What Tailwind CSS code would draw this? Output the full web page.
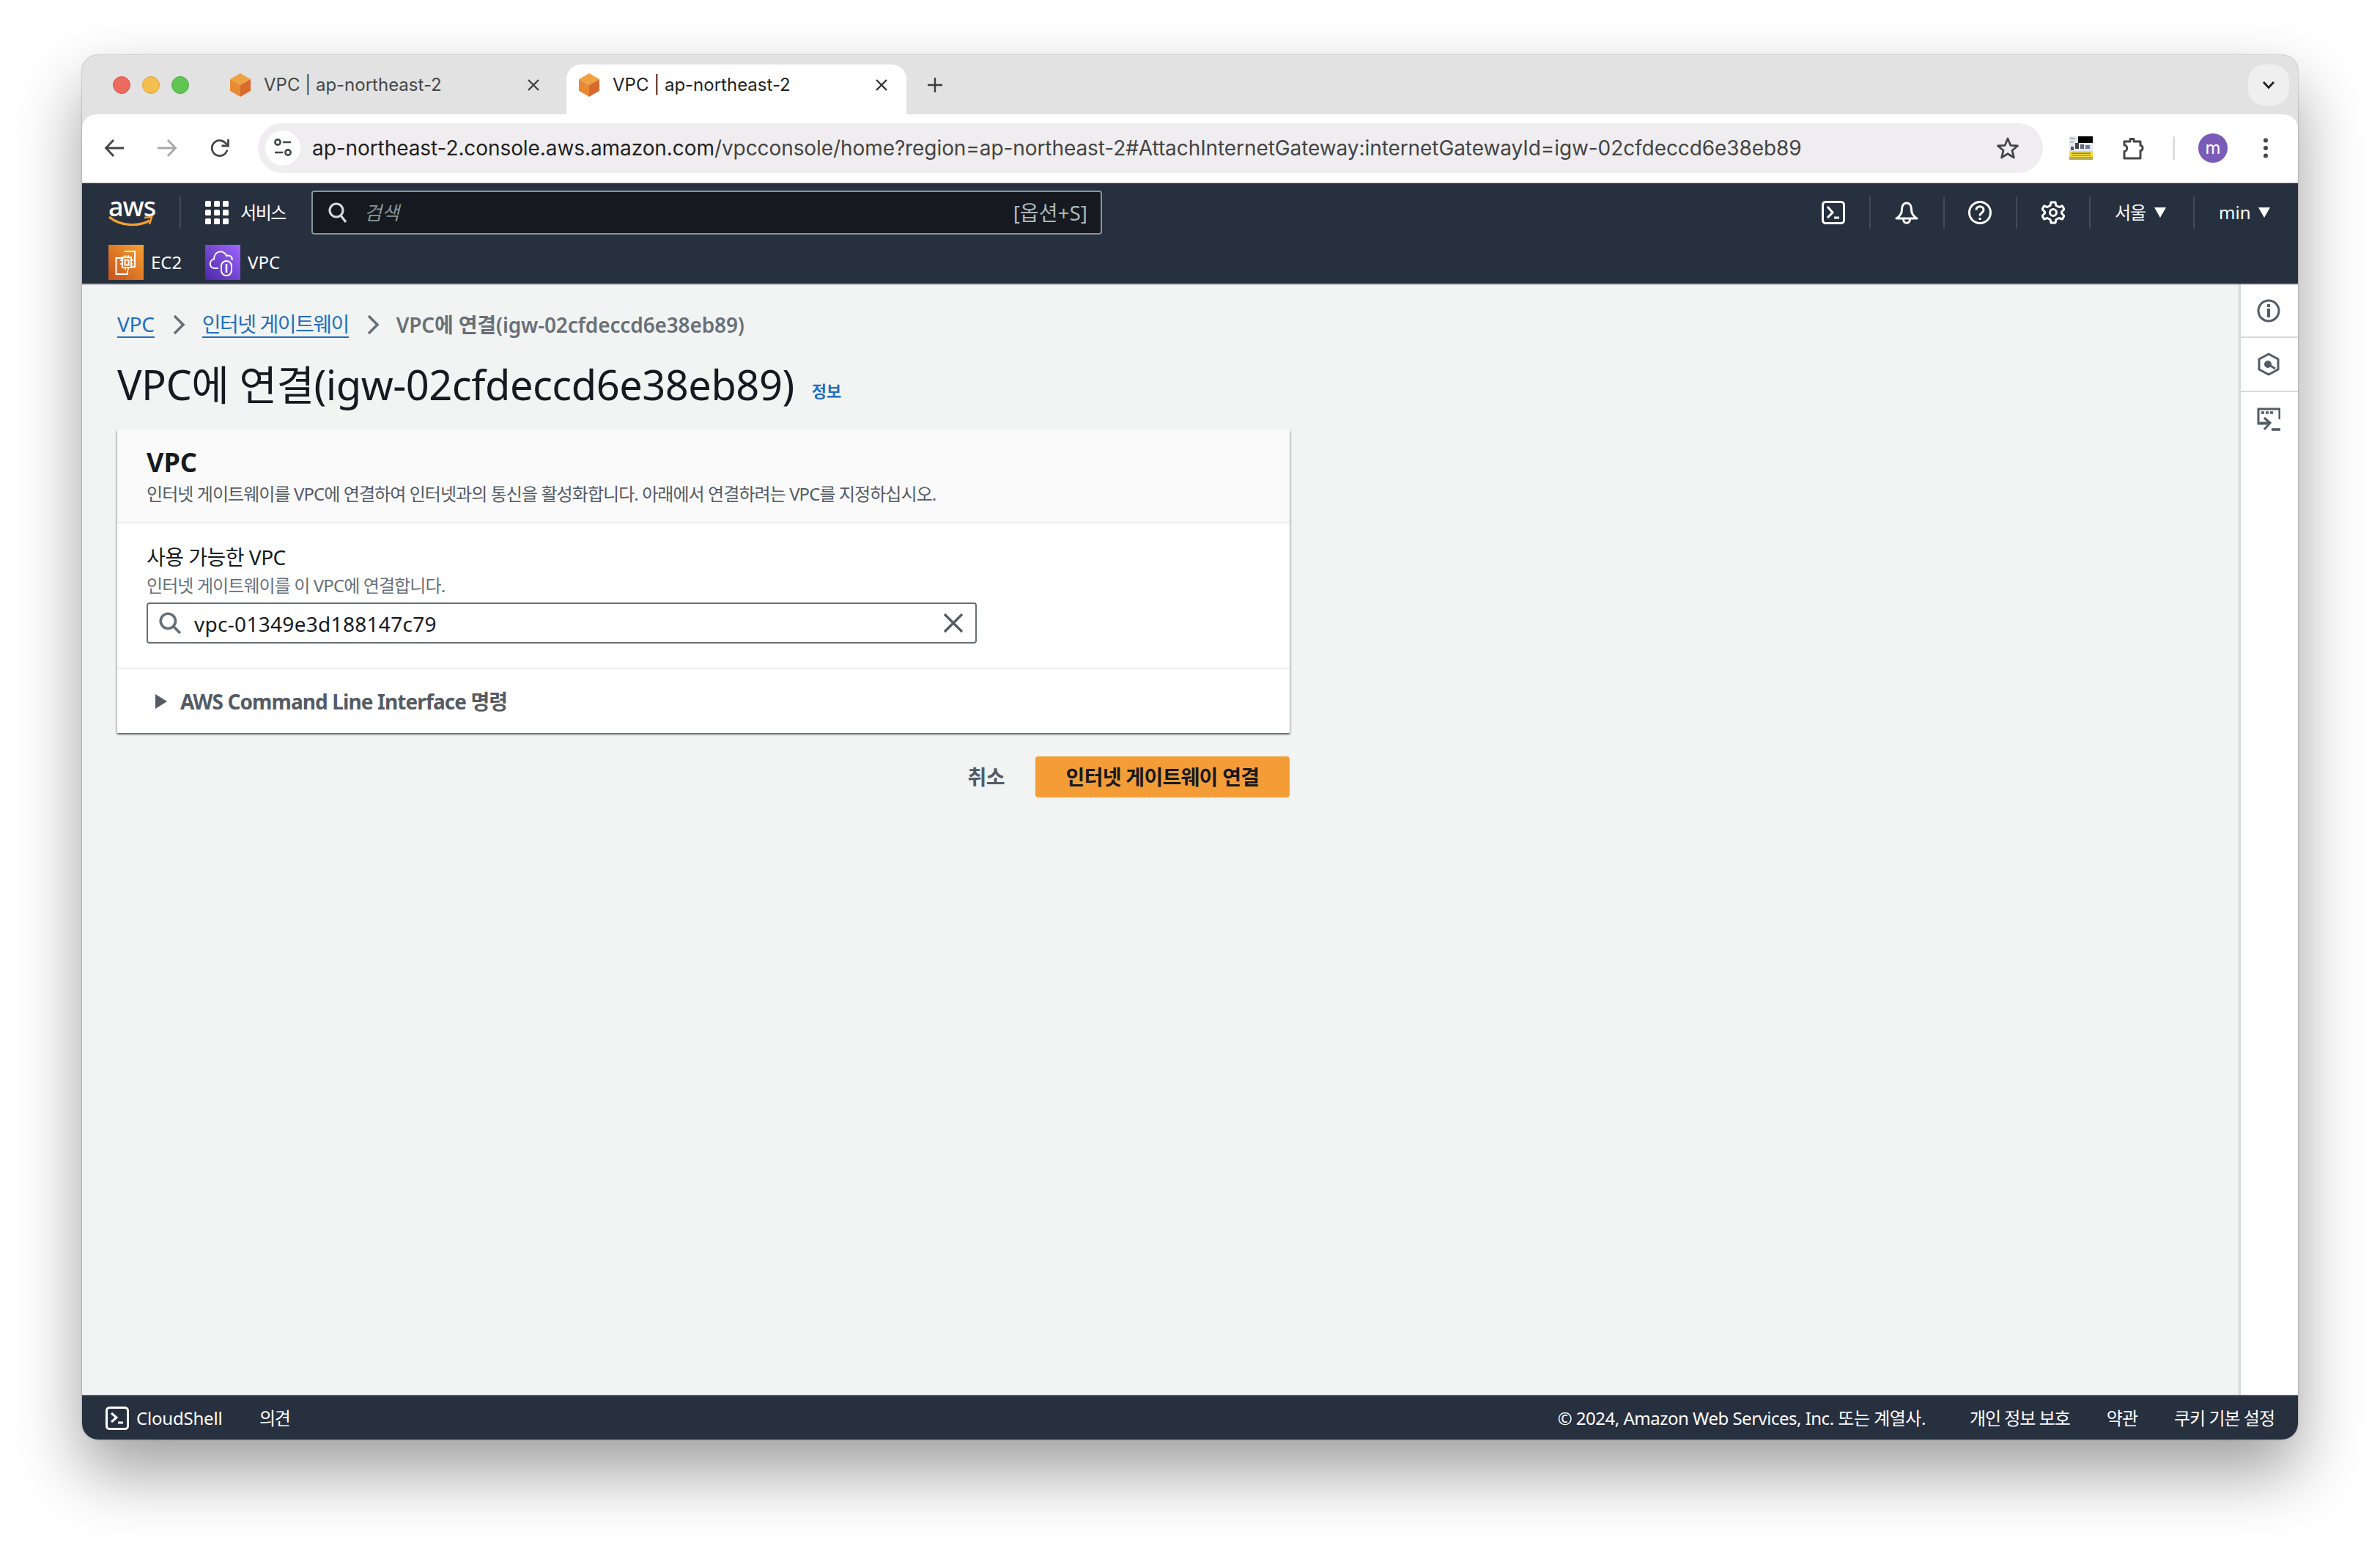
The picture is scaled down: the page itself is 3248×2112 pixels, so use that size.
<!DOCTYPE html>
<html lang="ko">
<head>
<meta charset="UTF-8">
<title>VPC | ap-northeast-2</title>
<script src="https://cdn.jsdelivr.net/npm/@tailwindcss/browser@4"></script>
</head>
<body class="bg-white w-[3248px] h-[2112px] overflow-hidden font-['Noto_Sans','Noto_Sans_CJK_KR',sans-serif]">
<div class="ml-[112px] mt-[75px] w-[3024px] h-[1889px] flex flex-col rounded-[22px] overflow-hidden bg-[#e2e2e2] shadow-[0_0_2px_rgba(0,0,0,0.45),0_44px_90px_rgba(0,0,0,0.38)]">

  <!-- tab strip -->
  <div class="h-[81px] shrink-0 flex pt-[13px] font-['Inter','Noto_Sans_CJK_KR',sans-serif] text-[24px]">
    <div class="h-[56px] ml-[42px] flex items-center gap-[16px]">
      <span class="w-[24px] h-[24px] rounded-full bg-[#ed6a5e] border border-[#d9534a]"></span>
      <span class="w-[24px] h-[24px] rounded-full bg-[#f5bf4f] border border-[#dca33a]"></span>
      <span class="w-[24px] h-[24px] rounded-full bg-[#61c554] border border-[#4cab40]"></span>
    </div>
    <div class="w-[459px] h-[68px] ml-[56px] pb-[12px] flex items-center text-[#444746]">
      <svg class="w-[28px] h-[32px] shrink-0" viewBox="0 0 28 32"><path d="M14 0 28 8 14 16 0 8z" fill="#f0a243"/><path d="M0 8 14 16V32L0 24z" fill="#e88a34"/><path d="M28 8 14 16V32L28 24z" fill="#d8692f"/></svg>
      <span class="ml-[18px] flex-1 whitespace-nowrap">VPC | ap-northeast-2</span>
      <svg class="w-[18px] h-[18px] mr-[36px]" viewBox="0 0 18 18" fill="none" stroke="#444" stroke-width="2.4"><path d="M2 2 16 16M16 2 2 16"/></svg>
    </div>
    <div class="w-[464px] h-[68px] pl-[17px] pr-[25px] pb-[12px] flex items-center bg-white rounded-t-[20px] text-[#1f1f1f]">
      <svg class="w-[28px] h-[32px] shrink-0" viewBox="0 0 28 32"><path d="M14 0 28 8 14 16 0 8z" fill="#f0a243"/><path d="M0 8 14 16V32L0 24z" fill="#e88a34"/><path d="M28 8 14 16V32L28 24z" fill="#d8692f"/></svg>
      <span class="ml-[18px] flex-1 whitespace-nowrap">VPC | ap-northeast-2</span>
      <svg class="w-[18px] h-[18px]" viewBox="0 0 18 18" fill="none" stroke="#333" stroke-width="2.4"><path d="M2 2 16 16M16 2 2 16"/></svg>
    </div>
    <div class="h-[56px] ml-[28px] flex items-center">
      <svg class="w-[22px] h-[22px]" viewBox="0 0 22 22" fill="none" stroke="#3c3c3c" stroke-width="2.4"><path d="M11 1V21M1 11H21"/></svg>
    </div>
    <div class="ml-auto mr-[12px] w-[56px] h-[56px] rounded-[22px] bg-[#efefef] flex items-center justify-center">
      <svg class="w-[18px] h-[12px]" viewBox="0 0 18 12" fill="none" stroke="#222" stroke-width="2.8"><path d="M2 2 9 9.5 16 2"/></svg>
    </div>
  </div>

  <!-- toolbar -->
  <div class="h-[94px] shrink-0 bg-white rounded-t-[20px] border-b-2 border-[#e3e4e4] flex items-center">
    <svg class="ml-[30px] w-[28px] h-[28px]" viewBox="0 0 28 28" fill="none" stroke="#444746" stroke-width="2.8"><path d="M27 14H3M13 3 2.500 14 13 25"/></svg>
    <svg class="ml-[44px] w-[28px] h-[28px]" viewBox="0 0 28 28" fill="none" stroke="#a8a8a8" stroke-width="2.8"><path d="M1 14H25M15 3 25.500 14 15 25"/></svg>
    <svg class="ml-[44px] w-[28px] h-[28px]" viewBox="0 0 28 28" fill="none" stroke="#444746" stroke-width="2.8"><path d="M24 16.500A10.500 10.500 0 1 1 21 6.500L25 10"/><path d="M25.500 2V11H16.500" /></svg>
    <div class="ml-[38px] w-[2436px] h-[68px] rounded-full bg-[#efedef] flex items-center pl-[10px] pr-[32px]">
      <div class="w-[48px] h-[48px] rounded-full bg-white flex items-center justify-center">
        <svg class="w-[26px] h-[28px]" viewBox="0 0 26 28" fill="none" stroke="#444746" stroke-width="2.6"><circle cx="6" cy="6" r="3.600"/><path d="M13 6H24M2 20H13"/><circle cx="20" cy="20" r="3.600"/></svg>
      </div>
      <span class="ml-[16px] flex-1 whitespace-nowrap font-['Inter',sans-serif] text-[28px] tracking-[-0.08px] text-[#1f1f1f]">ap-northeast-2.console.aws.amazon.com<span class="text-[#444]">/vpcconsole/home?region=ap-northeast-2#AttachInternetGateway:internetGatewayId=igw-02cfdeccd6e38eb89</span></span>
      <svg class="w-[32px] h-[32px]" viewBox="0 0 32 32" fill="none" stroke="#444746" stroke-width="2.800" stroke-linejoin="round"><path d="M16 3 19.800 12.300 29.500 13 22 19.300 24.400 29 16 23.700 7.600 29 10 19.300 2.500 13 12.200 12.300z"/></svg>
    </div>
    <svg class="ml-[36px] w-[32px] h-[32px]" viewBox="0 0 32 32">
      <rect width="32" height="32" fill="#e4e8f2"/><rect x="12" width="20" height="9" fill="#000"/><rect x="1" y="2" width="7" height="1.500" fill="#999"/><rect x="1" y="7" width="5" height="1.500" fill="#aaa"/><rect x="8" y="9" width="5" height="8" fill="#444"/><rect x="15" y="11" width="5" height="6" fill="#667"/><rect x="22" y="12" width="6" height="5" fill="#778"/><rect x="2" y="14" width="4" height="5" fill="#555"/><rect y="20" width="32" height="8" fill="#f6dd3c"/><rect x="3" y="22.500" width="26" height="1.200" fill="#665"/><rect x="3" y="25.500" width="26" height="1.200" fill="#887"/><rect y="28" width="32" height="4" fill="#b3a758"/>
    </svg>
    <svg class="ml-[40px] w-[32px] h-[32px]" viewBox="0 0 32 32" fill="none" stroke="#444746" stroke-width="3" stroke-linejoin="round"><path d="M3 7H11V3.500H16V7H25V12.500C29 11.500 29 20.500 25 19.500V30H3V20.500C8 20.500 8 12 3 12z"/></svg>
    <span class="ml-[37px] w-[3px] h-[32px] rounded bg-[#dedede]"></span>
    <span class="ml-[32px] w-[40px] h-[40px] rounded-full bg-[#7a5bb8] text-white text-[24px] flex items-center justify-center font-['Inter',sans-serif] leading-none">m</span>
    <svg class="ml-[48px] w-[8px] h-[28px]" viewBox="0 0 8 28" fill="#444746"><circle cx="4" cy="3.500" r="3"/><circle cx="4" cy="14" r="3"/><circle cx="4" cy="24.500" r="3"/></svg>
  </div>

  <!-- aws nav -->
  <div class="h-[138px] shrink-0 bg-[#27303f] border-b-2 border-[#525a66] text-white">
    <div class="h-[70px] pt-[10px] flex items-center text-[24px]">
      <div class="ml-[36px] w-[62px] h-[46px] relative">
        <span class="block text-[36px] leading-[30px] text-center font-medium tracking-[-1px]">aws</span>
        <svg class="absolute left-0 top-[26px] w-[62px] h-[20px]" viewBox="0 0 62 20" fill="none"><path d="M1 3C16 15 40 17 56 8" stroke="#f0a035" stroke-width="3.400"/><path d="M49 4 59 3 56 13" stroke="#f0a035" stroke-width="2.600"/></svg>
      </div>
      <span class="ml-[35px] w-[2px] h-[44px] bg-[#414b5a]"></span>
      <svg class="ml-[33px] w-[32px] h-[32px]" viewBox="0 0 32 32" fill="#fff"><rect width="8" height="8" rx="1.500"/><rect x="12" width="8" height="8" rx="1.500"/><rect x="24" width="8" height="8" rx="1.500"/><rect y="12" width="8" height="8" rx="1.500"/><rect x="12" y="12" width="8" height="8" rx="1.500"/><rect x="24" y="12" width="8" height="8" rx="1.500"/><rect y="24" width="8" height="8" rx="1.500"/><rect x="12" y="24" width="8" height="8" rx="1.500"/><rect x="24" y="24" width="8" height="8" rx="1.500"/></svg>
      <span class="ml-[16px] w-[62px] whitespace-nowrap tracking-[-1.400px]">서비스</span>
      <div class="ml-[35px] w-[1079px] h-[60px] flex items-center pl-[20px] pr-[18px] bg-[#16191f] border-2 border-[#87959a] rounded-[4px]">
        <svg class="w-[28px] h-[30px]" viewBox="0 0 28 30" fill="none" stroke="#d5dbdb" stroke-width="3.200"><circle cx="12" cy="12" r="9"/><path d="M18 19 25 28"/></svg>
        <span class="ml-[22px] italic text-[#879596] text-[26px] flex-1">검색</span>
        <span class="text-[#aab7b8] text-[28px]">[옵션+S]</span>
      </div>
      <svg class="ml-[982px] w-[32px] h-[32px]" viewBox="0 0 32 32" fill="none" stroke="#fff" stroke-width="3"><rect x="1.500" y="1.500" width="29" height="29" rx="4"/><path d="M8 8 15 16 8 23M17 23H24"/></svg>
      <span class="ml-[33px] w-[2px] h-[44px] bg-[#414b5a]"></span>
      <svg class="ml-[33px] w-[32px] h-[32px]" viewBox="0 0 32 32" fill="none" stroke="#fff" stroke-width="3" stroke-linejoin="round"><path d="M16 3C11 3 9.500 8 9.500 12 9.500 18 7 21 2 24H30C25 21 22.500 18 22.500 12 22.500 8 21 3 16 3z"/><path d="M11.500 25C11.500 32 20.500 32 20.500 25"/></svg>
      <span class="ml-[34px] w-[2px] h-[44px] bg-[#414b5a]"></span>
      <svg class="ml-[32px] w-[32px] h-[32px]" viewBox="0 0 32 32" fill="none" stroke="#fff" stroke-width="3"><circle cx="16" cy="16" r="14.500"/><path d="M11 12.500C11 6 21 6 21 12.500 21 16.500 16 16 16 20.500"/><path d="M16 23V26"/></svg>
      <span class="ml-[33px] w-[2px] h-[44px] bg-[#414b5a]"></span>
      <svg class="ml-[33px] w-[32px] h-[32px]" viewBox="0 0 32 32" fill="none" stroke="#fff" stroke-width="3" stroke-linejoin="round"><path d="M13 2H19L20 6.500 24 8.500 28.500 7 31 11.500 27.500 15V17L31 20.500 28.500 25 24 23.500 20 25.500 19 30H13L12 25.500 8 23.500 3.500 25 1 20.500 4.500 17V15L1 11.500 3.500 7 8 8.500 12 6.500z"/><circle cx="16" cy="16" r="4.500"/></svg>
      <span class="ml-[33px] w-[2px] h-[44px] bg-[#414b5a]"></span>
      <span class="ml-[33px] w-[41px] whitespace-nowrap tracking-[-1px]">서울</span>
      <span class="ml-[13px] w-0 h-0 border-x-[8px] border-x-transparent border-t-[14px] border-t-white"></span>
      <span class="ml-[37px] w-[2px] h-[44px] bg-[#414b5a]"></span>
      <span class="ml-[33px] w-[42px] whitespace-nowrap">min</span>
      <span class="ml-[12px] w-0 h-0 border-x-[8px] border-x-transparent border-t-[14px] border-t-white"></span>
    </div>
    <div class="h-[66px] pt-[14px] flex items-start text-[24px]">
      <div class="ml-[36px] w-[48px] h-[48px] bg-gradient-to-tr from-[#c8511b] to-[#f5a133] flex items-center justify-center">
        <svg class="w-[40px] h-[40px]" viewBox="0 0 40 40" fill="none" stroke="#fff" stroke-width="2"><path d="M18 5H32V26H28M17 14H6.500V36H22V31"/><rect x="15" y="13" width="12" height="14"/><rect x="18.500" y="16.500" width="5" height="7"/><path d="M19 10V13M23 10V13M19 27V30M23 27V30M12 17H15M12 22H15M27 17H30M27 22H30" stroke-width="1.600"/></svg>
      </div>
      <span class="ml-[10px] w-[41px] leading-[48px]">EC2</span>
      <div class="ml-[33px] w-[48px] h-[48px] bg-gradient-to-tr from-[#4d27a8] to-[#a166ff] flex items-center justify-center">
        <svg class="w-[40px] h-[40px]" viewBox="0 0 40 40" fill="none" stroke="#fff" stroke-width="2"><path d="M14 28H9C1 28 1 17 8 15.500 8 4 22 2 25 11 30 9 33.500 13 32.500 17"/><rect x="18" y="18" width="14" height="20" rx="7"/><path d="M25 22V34" stroke-width="2.600"/></svg>
      </div>
      <span class="ml-[10px] w-[44px] leading-[48px]">VPC</span>
    </div>
  </div>

  <!-- content -->
  <div class="flex-1 min-h-0 flex bg-[#f2f3f3]">
    <div class="flex-1 pl-[48px]">
      <div class="mt-[36px] h-[38px] flex items-center text-[28px] whitespace-nowrap">
        <a class="text-[#1f6fbd] border-b-2 border-[#1f6fbd] leading-[34px] tracking-[-0.2px]" href="#">VPC</a>
        <svg class="ml-[24px] w-[18px] h-[30px]" viewBox="0 0 18 30" fill="none" stroke="#687078" stroke-width="3.600"><path d="M3 3 15 15 3 27"/></svg>
        <a class="ml-[23px] text-[#1f6fbd] border-b-2 border-[#1f6fbd] leading-[34px] tracking-[-1.5px]" href="#">인터넷 게이트웨이</a>
        <svg class="ml-[24px] w-[18px] h-[30px]" viewBox="0 0 18 30" fill="none" stroke="#687078" stroke-width="3.600"><path d="M3 3 15 15 3 27"/></svg>
        <span class="ml-[23px] text-[#687078] font-semibold tracking-[-0.15px]">VPC에 연결(igw-02cfdeccd6e38eb89)</span>
      </div>
      <div class="mt-[28px] h-[68px] flex items-center whitespace-nowrap">
        <h1 class="text-[56px] leading-[68px] text-[#16191f] tracking-[-0.5px]">VPC에 연결(igw-02cfdeccd6e38eb89)</h1>
        <a class="ml-[24px] mt-[18px] text-[22px] font-semibold text-[#1f6fbd]" href="#">정보</a>
      </div>

      <div class="mt-[28px] w-[1600px] h-[414px] flex flex-col bg-white shadow-[0_2px_2px_rgba(0,28,36,0.5),2px_2px_2px_rgba(0,28,36,0.12),-2px_2px_2px_rgba(0,28,36,0.12)]">
        <div class="h-[128px] shrink-0 bg-[#fafafa] border-b-2 border-[#eaeded] pl-[40px] pt-[21px]">
          <h2 class="text-[36px] leading-[48px] font-bold text-[#16191f]">VPC</h2>
          <p class="mt-[1px] text-[24px] leading-[36px] text-[#545b64] whitespace-nowrap tracking-[-0.93px]">인터넷 게이트웨이를 VPC에 연결하여 인터넷과의 통신을 활성화합니다. 아래에서 연결하려는 VPC를 지정하십시오.</p>
        </div>
        <div class="h-[199px] shrink-0 border-b-2 border-[#eaeded] pl-[40px] pt-[28px]">
          <div class="text-[28px] leading-[36px] text-[#16191f] tracking-[-0.5px]">사용 가능한 VPC</div>
          <div class="mt-[3px] text-[24px] leading-[36px] text-[#687078] tracking-[-0.9px]">인터넷 게이트웨이를 이 VPC에 연결합니다.</div>
          <div class="mt-[5px] w-[1133px] h-[56px] flex items-center bg-white border-2 border-[#687078] rounded-[4px] pl-[14px] pr-[16px]">
            <svg class="w-[32px] h-[32px]" viewBox="0 0 30 30" fill="none" stroke="#687078" stroke-width="3.400"><circle cx="12.500" cy="12.500" r="9.500"/><path d="M19.500 19.500 28 28"/></svg>
            <span class="ml-[17px] flex-1 text-[28px] leading-[38px] mt-[2px] text-[#16191f] tracking-[0.3px]">vpc-01349e3d188147c79</span>
            <svg class="w-[28px] h-[28px]" viewBox="0 0 28 28" fill="none" stroke="#545b64" stroke-width="3.200"><path d="M2 2 26 26M26 2 2 26"/></svg>
          </div>
        </div>
        <div class="flex-1 flex items-center pl-[52px] text-[28px] font-bold text-[#545b64] whitespace-nowrap tracking-[-0.9px]">
          <span class="w-0 h-0 border-y-[10px] border-y-transparent border-l-[16px] border-l-[#545b64]"></span>
          <span class="ml-[18px]">AWS Command Line Interface 명령</span>
        </div>
      </div>

      <div class="mt-[32px] w-[1600px] flex items-center justify-end text-[28px] font-bold tracking-[-0.5px]">
        <span class="text-[#545b64]">취소</span>
        <button class="ml-[42px] w-[347px] h-[56px] rounded-[4px] bg-[#f49d37] text-[#16191f] tracking-[-0.7px]">인터넷 게이트웨이 연결</button>
      </div>
    </div>

    <div class="w-[80px] shrink-0 bg-white border-l-2 border-[#d5dbdb] pr-[2px] shadow-[-1px_0_2px_rgba(0,0,0,0.12)] flex flex-col">
      <div class="h-[73px] flex items-center justify-center border-b-2 border-[#d5dbdb] -mr-[2px] pr-[2px]">
        <svg class="w-[32px] h-[32px]" viewBox="0 0 32 32" fill="none" stroke="#545b64" stroke-width="3"><circle cx="16" cy="16" r="14"/><path d="M16 13V25" stroke-width="4"/><path d="M16 7V11" stroke-width="4"/></svg>
      </div>
      <div class="h-[74px] flex items-center justify-center border-b-2 border-[#d5dbdb] -mr-[2px] pr-[2px]">
        <svg class="w-[30px] h-[32px]" viewBox="0 0 30 32" fill="none" stroke="#545b64" stroke-width="3" stroke-linejoin="round"><path d="M15 2 28 9V23L15 30 2 23V9z"/><circle cx="14" cy="16" r="3.500" fill="#545b64"/><path d="M16 17 24 22"/></svg>
      </div>
      <div class="h-[74px] flex items-center justify-center">
        <svg class="w-[32px] h-[32px]" viewBox="0 0 32 32" fill="none" stroke="#545b64" stroke-width="3"><path d="M31 16V2H2V22H14"/><path d="M6 7H10M12 7H16M18 7H22" stroke-width="3.400"/><path d="M10 14 18 21 10 30"/><path d="M4 21H17"/><path d="M20 30H32" stroke-width="3.600"/></svg>
      </div>
    </div>
  </div>

  <!-- footer -->
  <div class="h-[61px] shrink-0 bg-[#27303f] border-t-2 border-[#525a66] flex items-center text-white text-[24px] whitespace-nowrap">
    <svg class="ml-[32px] w-[32px] h-[32px]" viewBox="0 0 32 32" fill="none" stroke="#fff" stroke-width="3"><rect x="1.500" y="1.500" width="29" height="29" rx="4"/><path d="M8 9 15 15 8 21M17 22H24"/></svg>
    <span class="ml-[10px] w-[117px] tracking-[-0.2px]">CloudShell</span>
    <span class="ml-[51px] tracking-[-1.400px]">의견</span>
    <span class="ml-auto tracking-[-0.5px]">© 2024, Amazon Web Services, Inc. 또는 계열사.</span>
    <span class="ml-[60px] tracking-[-1px]">개인 정보 보호</span>
    <span class="ml-[50px] tracking-[-1px]">약관</span>
    <span class="ml-[50px] mr-[32px] tracking-[-1px]">쿠키 기본 설정</span>
  </div>
</div>
</body>
</html>
